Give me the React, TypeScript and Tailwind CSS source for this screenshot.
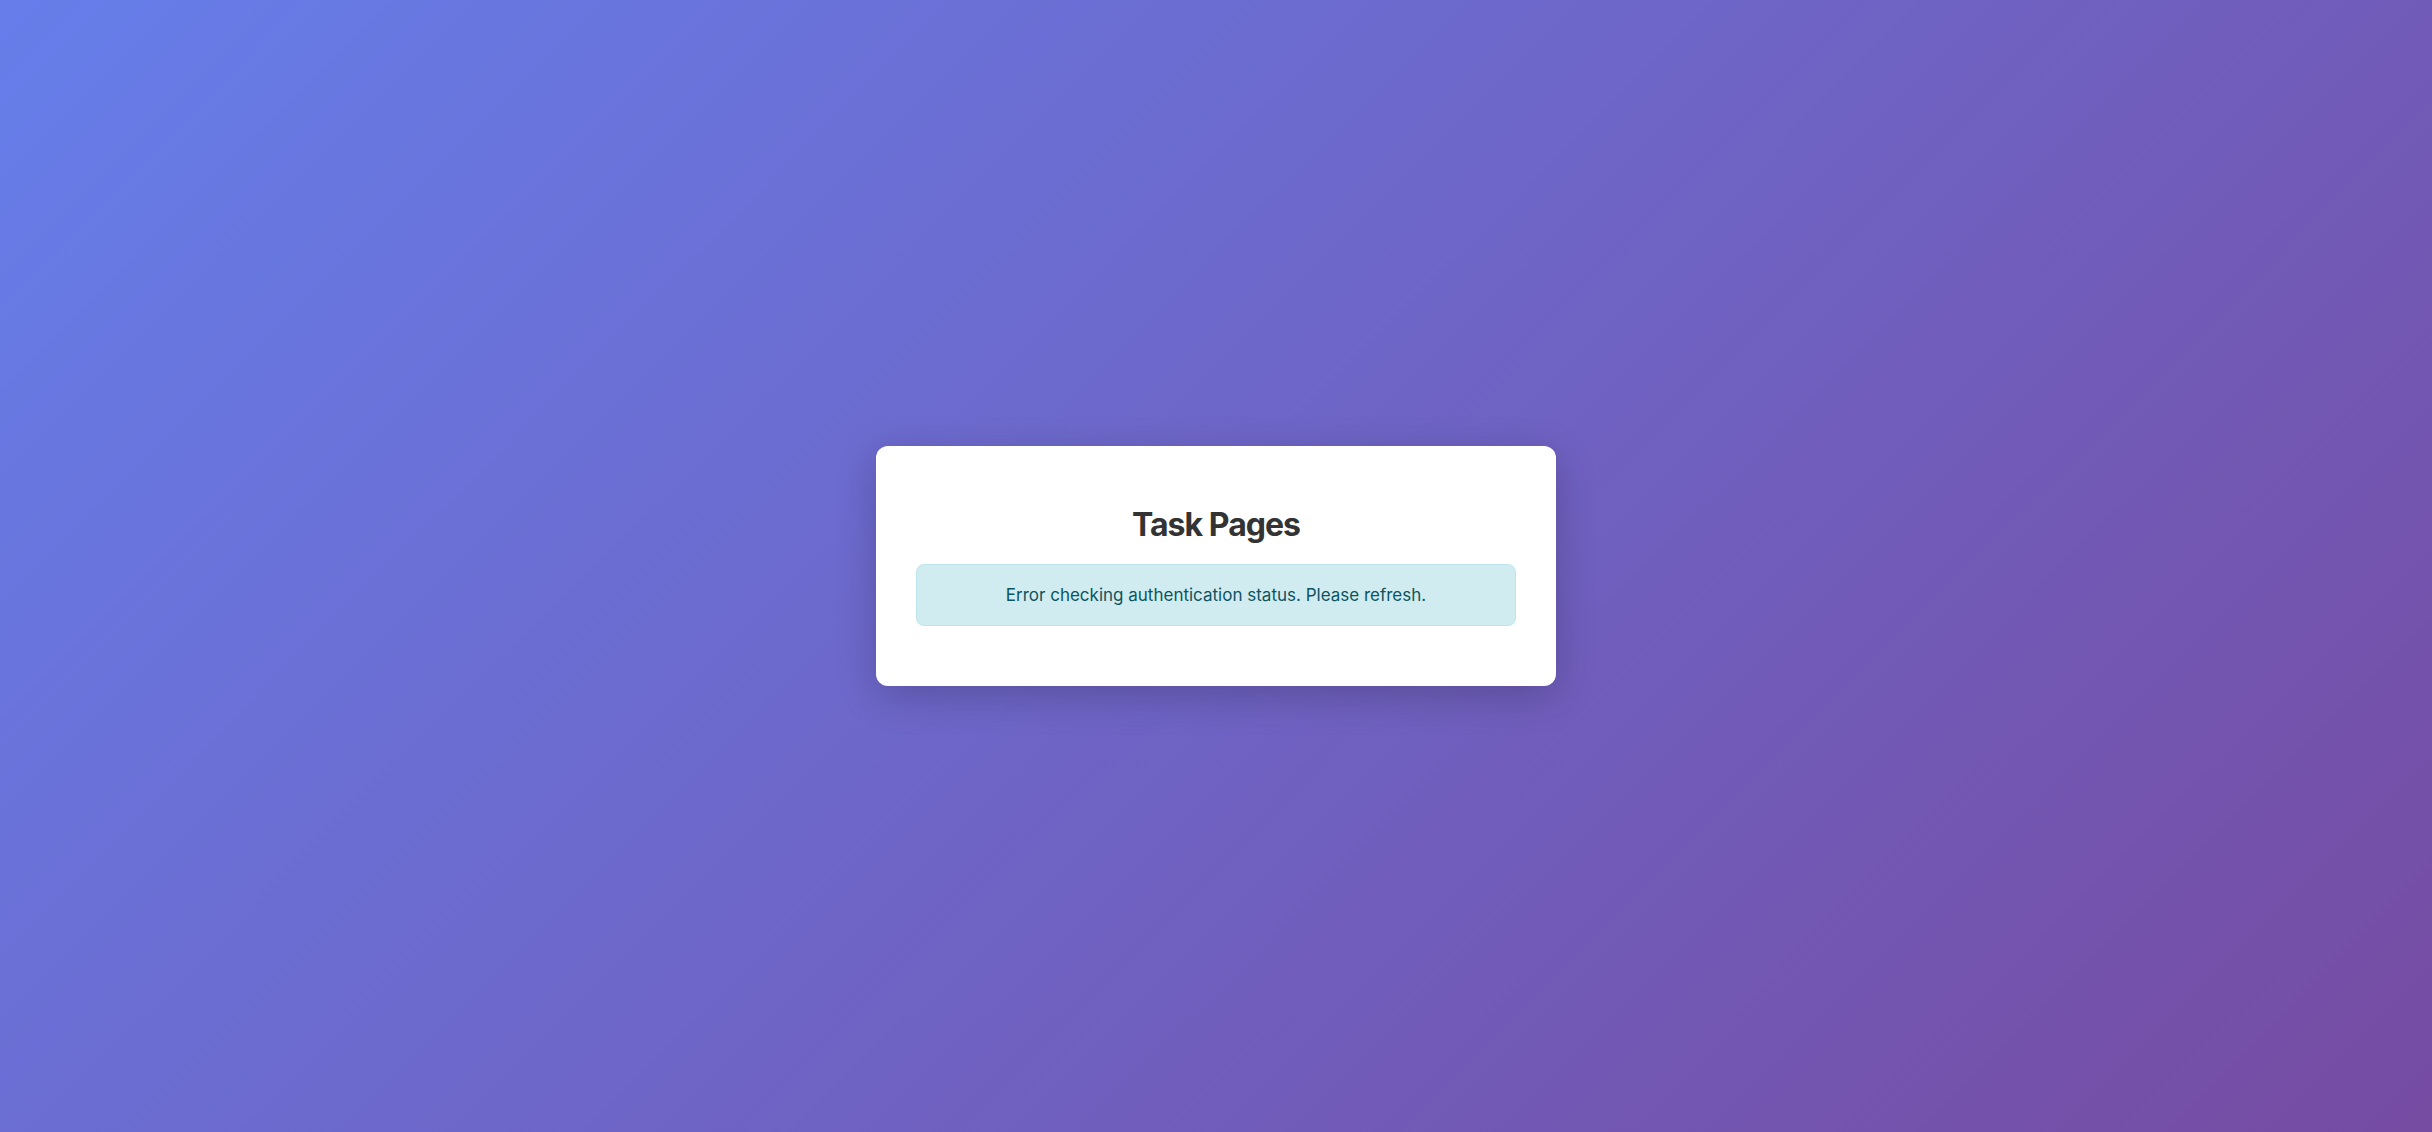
export default function App() {
  return (
    <div
      className="flex min-h-screen items-center justify-center bg-[linear-gradient(135deg,#667eea_0%,#764ba2_100%)]"
      style={{ fontFamily: 'Inter, "Noto Sans", sans-serif' }}
    >
      <div className="w-[680px] rounded-xl bg-white p-10 text-center shadow-[0_10px_40px_rgba(0,0,0,0.2)]">
        <h1 className="my-[20px] text-[32px] font-bold leading-[38px] tracking-[-0.03em] text-[#333]">Task Pages</h1>
        <div className="my-[20px] rounded-lg border border-[#bee5eb] bg-[#d1ecf1] py-[18px] text-[17px] leading-6 text-[#0c5460]">
          Error checking authentication status. Please refresh.
        </div>
      </div>
    </div>
  );
}
